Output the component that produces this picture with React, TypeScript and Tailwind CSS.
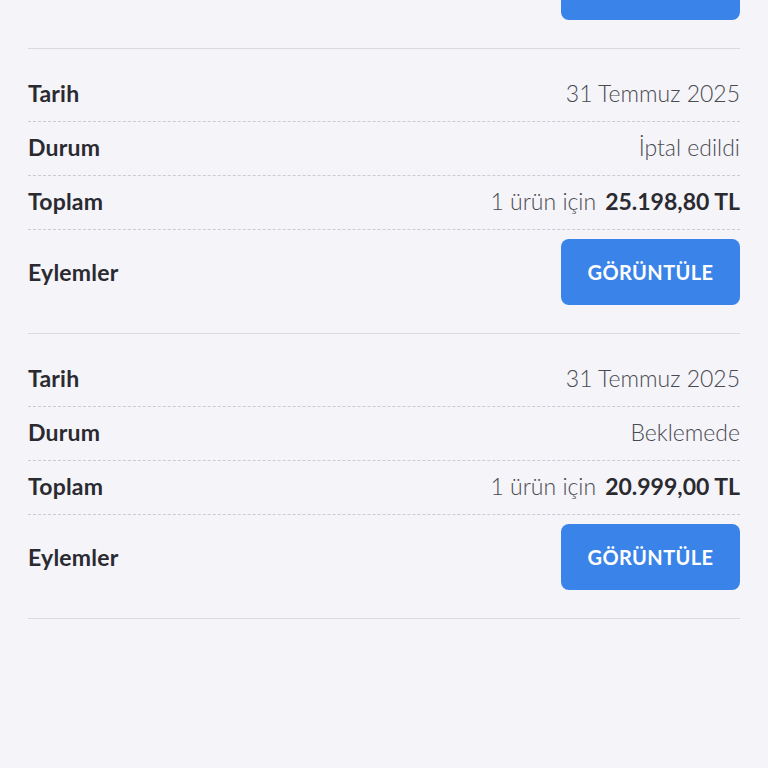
import React from "react";

const font = { fontFamily: "Lato, 'Noto Sans', sans-serif" };

function Btn({ label = true }: { label?: boolean }) {
  return (
    <button className="h-[66px] w-[179px] rounded-[8px] bg-[#3a83e9] text-[20px] font-bold tracking-[0.4px] text-white">
      {label ? "GÖRÜNTÜLE" : ""}
    </button>
  );
}

function Row({ label, children }: { label: string; children: React.ReactNode }) {
  return (
    <div className="flex h-[54px] items-center justify-between border-b border-dashed border-[#cbcbd3] pb-[2px]">
      <span className="text-[23px] font-bold tracking-[0.2px] text-[#2a2a30]">{label}</span>
      <div className="flex items-center gap-[9px] text-[23px] font-light text-[#4a4a51]">{children}</div>
    </div>
  );
}

function Order({ status, amount }: { status: string; amount: string }) {
  return (
    <div className="border-b border-[#d9d9de] pt-[19px]">
      <Row label="Tarih">31 Temmuz 2025</Row>
      <Row label="Durum">{status}</Row>
      <Row label="Toplam">
        <span>1 ürün için</span>
        <span className="font-bold text-[#2a2a30]">{amount}</span>
      </Row>
      <div className="flex items-center justify-between pb-[28px] pt-[9px]">
        <span className="text-[23px] font-bold tracking-[0.2px] text-[#2a2a30]">Eylemler</span>
        <Btn />
      </div>
    </div>
  );
}

export default function App() {
  return (
    <div className="min-h-[768px] bg-[#f4f4f9]" style={font}>
      <div className="px-[28px]">
        <div className="flex h-[49px] flex-col justify-end overflow-hidden border-b border-[#d9d9de]">
          <div className="flex shrink-0 justify-end pb-[28px]">
            <Btn label={false} />
          </div>
        </div>
        <Order status="İptal edildi" amount="25.198,80 TL" />
        <Order status="Beklemede" amount="20.999,00 TL" />
      </div>
    </div>
  );
}
